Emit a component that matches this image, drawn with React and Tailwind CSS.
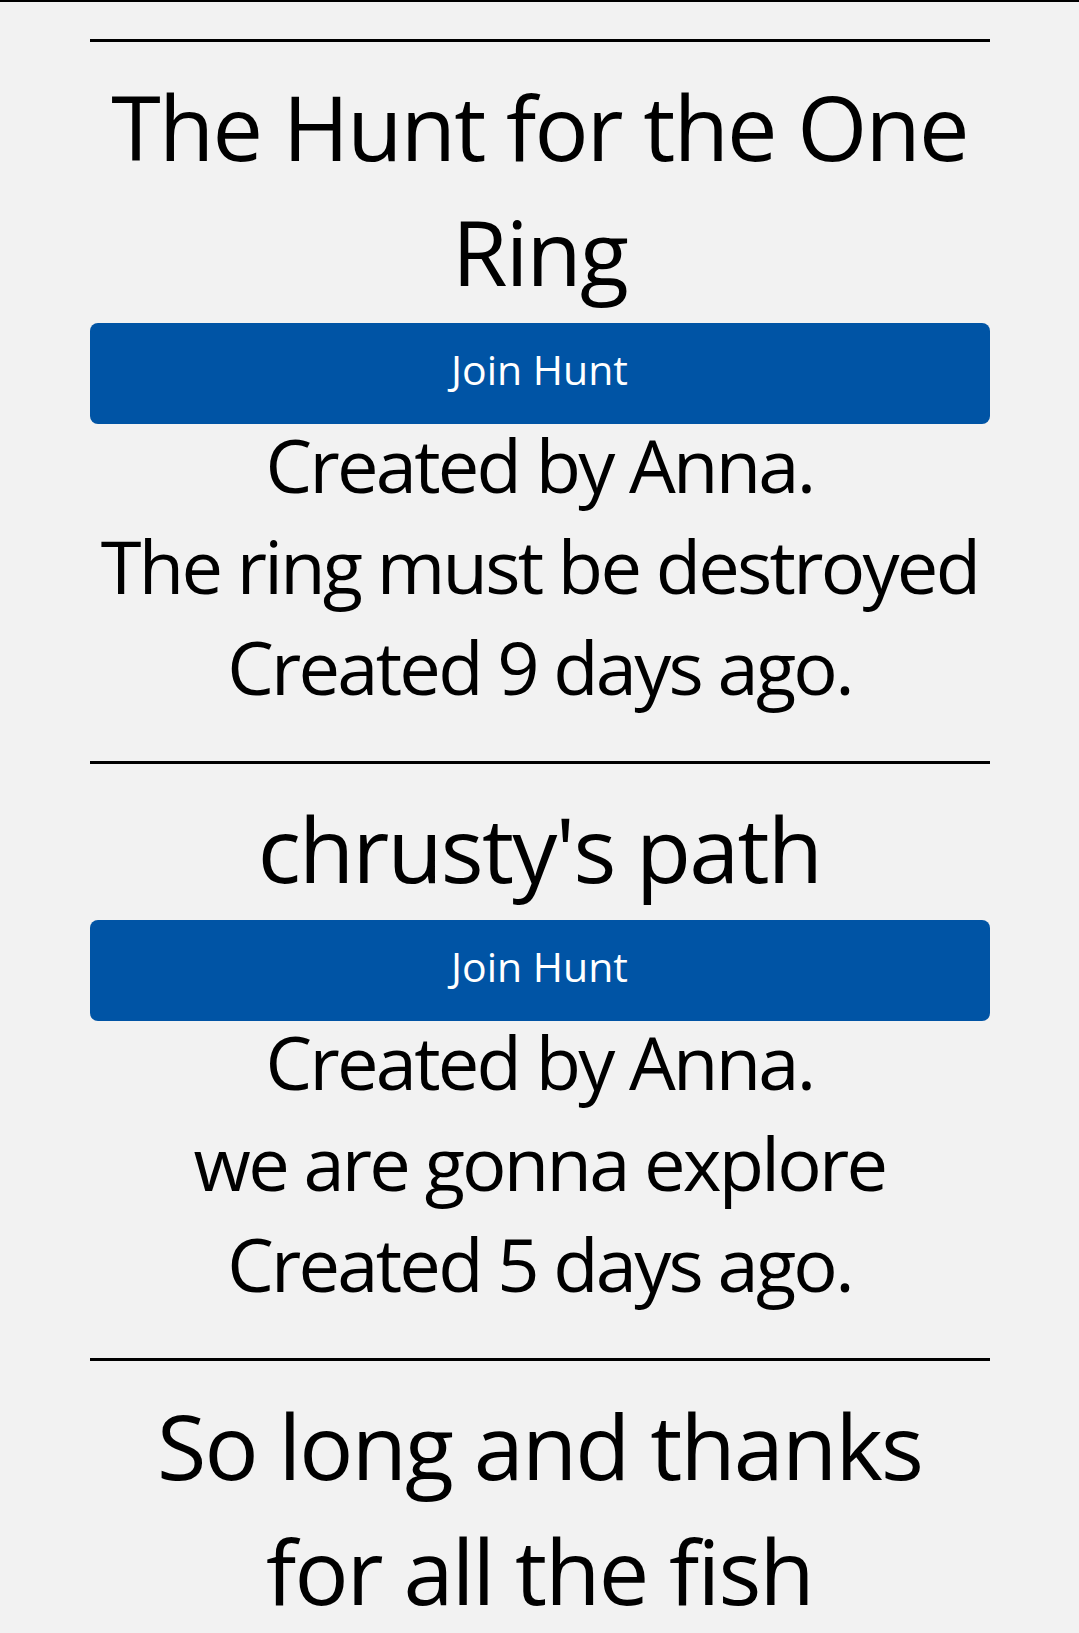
const hunts = [
  {
    id: 1,
    title: "The Hunt for the One Ring",
    creator: "Anna",
    description: "The ring must be destroyed",
    daysAgo: 9,
  },
  {
    id: 2,
    title: "chrusty's path",
    creator: "Anna",
    description: "we are gonna explore",
    daysAgo: 5,
  },
  {
    id: 3,
    title: "So long and thanks for all the fish",
    creator: "Anna",
    description: "",
    daysAgo: 2,
  },
];

const HuntCard = ({ hunt }) => {
  return (
    <div className="flex flex-col mb-[53px]">
      {/* Divider */}
      <hr className="border-0 border-t-[3px] border-black" />

      {/* Title */}
      <h2 className="mt-[22px] text-[90px] leading-[125px] tracking-[-0.02em] text-center text-black">
        {hunt.title}
      </h2>

      {/* Join button */}
      <button className="mt-[9px] h-[101px] w-full rounded-lg bg-[#0054a5] text-white text-[41px] pb-[8px]">
        Join Hunt
      </button>

      {/* Details */}
      <div className="flex flex-col gap-[19px] text-center text-[74px] leading-[82px] tracking-[-0.037em] text-black">
        <p>Created by {hunt.creator}.</p>
        {hunt.description && <p>{hunt.description}</p>}
        <p>Created {hunt.daysAgo} days ago.</p>
      </div>
    </div>
  );
};

export default function App() {
  return (
    <div className="min-h-screen bg-[#f2f2f2] border-t-2 border-black font-['Open_Sans',sans-serif]">
      <div className="w-[900px] mx-auto pt-[37px]">
        {hunts.map((hunt) => (
          <HuntCard key={hunt.id} hunt={hunt} />
        ))}
      </div>
    </div>
  );
}
